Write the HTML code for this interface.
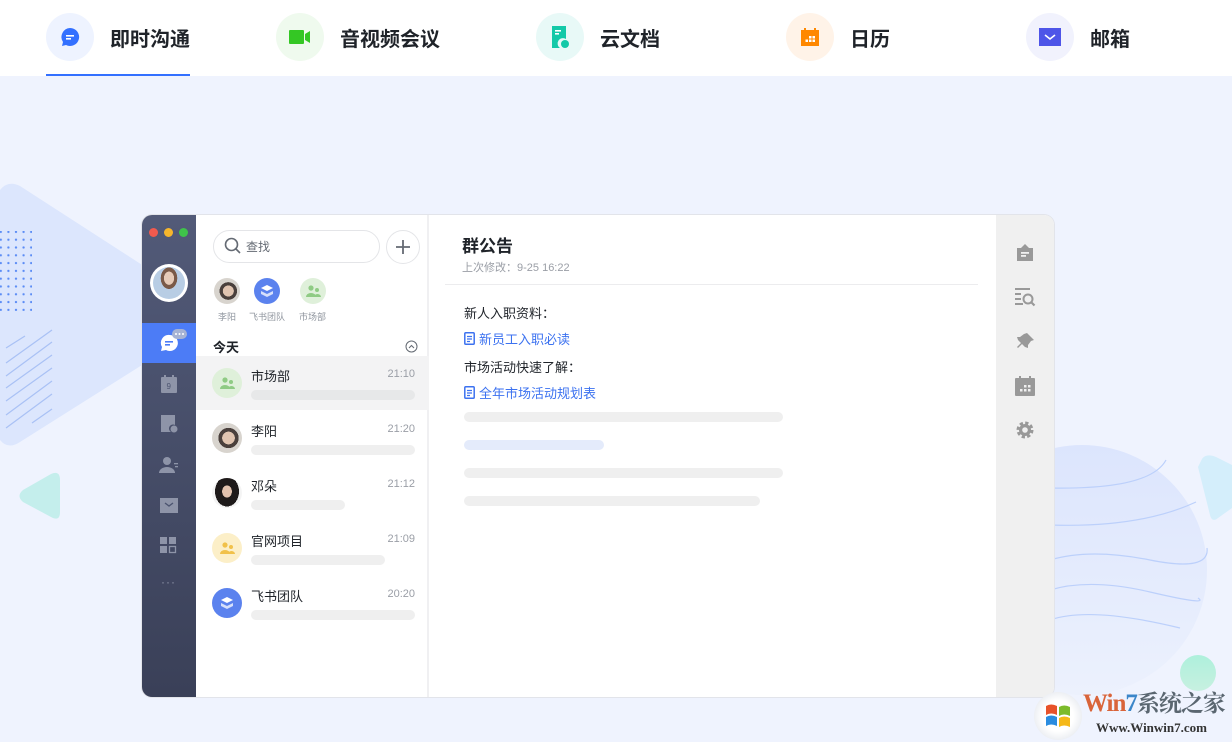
<!DOCTYPE html>
<html><head><meta charset="utf-8"><style>
*{margin:0;padding:0;box-sizing:border-box}
body{width:1232px;height:742px;overflow:hidden;background:#eff3fe;font-family:"Liberation Sans","Noto Sans CJK SC",sans-serif;position:relative;color:#1f2329}
.hdr{position:absolute;left:0;top:0;width:1232px;height:76px;background:#fff}
.tab{position:absolute;top:13px;height:48px;display:flex;align-items:center}
.tab .ic{width:48px;height:48px;border-radius:50%;display:flex;align-items:center;justify-content:center}
.tab span{margin-left:16px;font-size:20px;font-weight:bold;color:#1f2329}
.abs{position:absolute}
.win{position:absolute;left:142px;top:215px;width:912px;height:482px;border-radius:10px;overflow:hidden;background:#fff;box-shadow:0 0 0 1px #e2e4ea}
.side{position:absolute;left:0;top:0;width:54px;height:482px;background:linear-gradient(#525a78,#3a4058)}
.list{position:absolute;left:54px;top:0;width:233px;height:482px;background:#fff;border-right:2px solid #f0f0f2}
.rp{position:absolute;left:854px;top:0;width:58px;height:482px;background:#f0f0f0}
.bar{position:absolute;height:10px;border-radius:5px;background:#efefef}
.item{position:absolute;left:0;width:233px;height:54px}
.item .av{position:absolute;left:16px;top:12px;width:30px;height:30px;border-radius:50%}
.item .nm{position:absolute;left:55px;top:10px;font-size:13px;color:#1f2329}
.item .tm{position:absolute;right:14px;top:12px;font-size:11px;color:#9a9ea6}
.lnk{position:absolute;left:322px;font-size:13px;color:#3c72f0;display:flex;align-items:center;gap:4px}
</style></head><body>
<div class="hdr">
 <div class="tab" style="left:46px"><div class="ic" style="background:#eef3ff"><svg width="22" height="22" viewBox="0 0 22 22"><path d="M11 2a9 9 0 1 1-4 17L3 20l1-4A9 9 0 0 1 11 2z" fill="#3370ff"/><rect x="7" y="9" width="8" height="1.6" fill="#fff"/><rect x="7" y="12" width="5" height="1.6" fill="#fff"/></svg></div><span>即时沟通</span></div>
 <div class="tab" style="left:276px"><div class="ic" style="background:#effaee"><svg width="24" height="16"><rect x="1" y="1" width="15" height="14" rx="1" fill="#34c724"/><path d="M17 5l5-3v12l-5-3z" fill="#34c724"/></svg></div><span>音视频会议</span></div>
 <div class="tab" style="left:536px"><div class="ic" style="background:#e8f9f7"><svg width="20" height="24"><path d="M2 1h14v13a5 5 0 0 0-6 9H2z" fill="#14c9a8"/><circle cx="15" cy="19" r="4" fill="#14c9a8"/><rect x="5" y="5" width="6" height="1.6" fill="#fff"/><rect x="5" y="8" width="4" height="1.6" fill="#fff"/></svg></div><span>云文档</span></div>
 <div class="tab" style="left:786px"><div class="ic" style="background:#fff3e8"><svg width="20" height="20"><rect x="1" y="3" width="18" height="16" fill="#ff8800"/><rect x="4" y="1" width="2" height="4" fill="#ff8800"/><rect x="14" y="1" width="2" height="4" fill="#ff8800"/><g fill="#fff"><rect x="9" y="9" width="2.5" height="2.5"/><rect x="12.5" y="9" width="2.5" height="2.5"/><rect x="5.5" y="12.5" width="2.5" height="2.5"/><rect x="9" y="12.5" width="2.5" height="2.5"/><rect x="12.5" y="12.5" width="2.5" height="2.5"/></g></svg></div><span>日历</span></div>
 <div class="tab" style="left:1026px"><div class="ic" style="background:#f1f2fd"><svg width="22" height="18"><rect x="0" y="0" width="22" height="18" fill="#4e55e8"/><path d="M6 7l5 4 5-4" stroke="#fff" stroke-width="1.6" fill="none"/></svg></div><span>邮箱</span></div>
 <div class="abs" style="left:46px;top:74px;width:144px;height:2px;background:#3370ff"></div>
</div>

<svg class="abs" style="left:0;top:180px" width="150" height="270"><path d="M0 10 Q8 0 20 6 L150 90 L150 180 L20 262 Q8 270 0 260z" fill="#dce6fd"/>
<g stroke="#a9c1f5" stroke-width="1.2"><line x1="6" y1="168" x2="25" y2="156"/><line x1="6" y1="183" x2="52" y2="150"/><line x1="6" y1="196" x2="52" y2="162"/><line x1="6" y1="208" x2="52" y2="175"/><line x1="6" y1="221" x2="52" y2="188"/><line x1="6" y1="235" x2="52" y2="201"/><line x1="6" y1="248" x2="52" y2="214"/><line x1="32" y1="243" x2="52" y2="229"/></g>
</svg>
<div class="abs" style="left:0;top:231px;width:32px;height:80px;background-image:radial-gradient(circle,#5b8cf5 1px,transparent 1.3px);background-size:7.6px 7.8px;background-position:-3px -3px"></div>
<svg class="abs" style="left:18px;top:472px" width="45" height="48"><path d="M5 18 L33 2 Q42 -2 42 8 L42 40 Q42 50 33 45 L5 30 Q-2 24 5 18z" fill="#c4eeec"/></svg>
<svg class="abs" style="left:1050px;top:440px" width="182" height="260"><defs><linearGradient id="g" x1="0" y1="0" x2="0" y2="1"><stop offset="0" stop-color="#dce5fd"/><stop offset="1" stop-color="#ecf1fd"/></linearGradient></defs><circle cx="32" cy="130" r="125" fill="url(#g)"/><g stroke="#bcd0fb" stroke-width="1.2" fill="none"><path d="M0 48 Q100 50 116 20"/><path d="M0 85 Q90 88 146 62"/><path d="M0 120 Q40 108 100 120 T157 108"/><path d="M0 150 Q40 138 100 152 T148 158"/><path d="M0 180 Q40 166 130 188"/></g></svg>
<svg class="abs" style="left:1196px;top:453px" width="36" height="70"><path d="M6 6 Q10 0 20 4 L36 12 L36 55 L22 65 Q16 70 14 62 L2 14z" fill="#d4eefb"/></svg>
<div class="abs" style="left:1180px;top:655px;width:36px;height:36px;border-radius:50%;background:linear-gradient(#aef0dc,#c7f0e0)"></div>

<div class="win">
 <div class="side">
  <div class="abs" style="left:7px;top:13px;width:9px;height:9px;border-radius:50%;background:#f25a4e"></div>
  <div class="abs" style="left:22px;top:13px;width:9px;height:9px;border-radius:50%;background:#f6b62c"></div>
  <div class="abs" style="left:37px;top:13px;width:9px;height:9px;border-radius:50%;background:#3fc34a"></div>
  <div class="abs" style="left:8px;top:49px;width:38px;height:38px;border-radius:50%;background:#fff;padding:3px"><div style="width:32px;height:32px;border-radius:50%;background:radial-gradient(ellipse at 50% 35%,#e6cbb8 0 22%,#7a5a48 23% 36%,#b8cde4 37%)"></div></div>
  <div class="abs" style="left:0;top:108px;width:54px;height:40px;background:#4c7cf6"></div>
  <svg class="abs" style="left:16px;top:112px" width="32" height="30"><path d="M12 8a8 8 0 1 1-4 15L3 24l1-4A8 8 0 0 1 12 8z" fill="#fff"/><rect x="7" y="14" width="8" height="1.6" fill="#4c7cf6"/><rect x="7" y="17" width="5" height="1.6" fill="#4c7cf6"/><rect x="14" y="2" width="15" height="10" rx="5" fill="#a6b3d4"/><g fill="#fff"><circle cx="18" cy="7" r="1"/><circle cx="21.5" cy="7" r="1"/><circle cx="25" cy="7" r="1"/></g></svg>
  <svg class="abs" style="left:18px;top:160px" width="18" height="18"><rect x="1" y="2" width="16" height="16" rx="1" fill="#8e94a8"/><rect x="4" y="0" width="2" height="4" fill="#8e94a8"/><rect x="12" y="0" width="2" height="4" fill="#8e94a8"/><text x="6.5" y="14" font-size="8" fill="#4c5470" font-family="Liberation Sans">9</text></svg>
  <svg class="abs" style="left:18px;top:199px" width="18" height="19"><path d="M1 1h14v10a4 4 0 0 0-4 7H1z" fill="#8e94a8"/><circle cx="14" cy="15" r="3.5" fill="#8e94a8"/></svg>
  <svg class="abs" style="left:17px;top:241px" width="20" height="18"><circle cx="8" cy="5" r="4" fill="#8e94a8"/><path d="M0 17a8 6 0 0 1 16 0z" fill="#8e94a8"/><rect x="15" y="7" width="4" height="1.3" fill="#8e94a8"/><rect x="16" y="10" width="3" height="1.3" fill="#8e94a8"/></svg>
  <svg class="abs" style="left:18px;top:283px" width="18" height="15"><rect width="18" height="15" fill="#8e94a8"/><path d="M5 5l4 3 4-3" stroke="#4c5470" stroke-width="1.4" fill="none"/></svg>
  <svg class="abs" style="left:18px;top:322px" width="17" height="17" fill="#8e94a8"><rect width="7" height="7"/><rect x="9" width="7" height="7"/><rect y="9" width="7" height="7"/><rect x="9.5" y="9.5" width="6" height="6" fill="none" stroke="#8e94a8" stroke-width="1.3"/></svg>
  <div class="abs" style="left:19px;top:360px;font-size:12px;letter-spacing:1px;color:#8e94a8">···</div>
 </div>
 <div class="list">
  <div class="abs" style="left:17px;top:15px;width:167px;height:33px;border:1px solid #e4e5e8;border-radius:17px"></div>
  <svg class="abs" style="left:28px;top:22px" width="18" height="18"><circle cx="7.5" cy="7.5" r="6" stroke="#646a73" stroke-width="1.6" fill="none"/><path d="M12 12l4 4" stroke="#646a73" stroke-width="1.6"/></svg>
  <div class="abs" style="left:50px;top:23px;font-size:12px;color:#646a73">查找</div>
  <div class="abs" style="left:190px;top:15px;width:34px;height:34px;border:1px solid #e4e5e8;border-radius:50%"></div>
  <svg class="abs" style="left:199px;top:24px" width="16" height="16"><path d="M8 1v14M1 8h14" stroke="#646a73" stroke-width="1.8"/></svg>
  <div class="abs" style="left:18px;top:63px;width:26px;height:26px;border-radius:50%;background:radial-gradient(circle at 55% 50%,#e0c4b0 0 28%,#4a403c 29% 45%,#d8d4ce 46%)"></div>
  <div class="abs" style="left:58px;top:63px;width:26px;height:26px;border-radius:50%;background:#5b82ee"></div>
  <svg class="abs" style="left:64px;top:69px" width="14" height="14"><path d="M7 1l6 3-6 3-6-3z" fill="#fff"/><path d="M1 7l6 3 6-3v3l-6 3-6-3z" fill="#d6e0fb"/></svg>
  <div class="abs" style="left:104px;top:63px;width:26px;height:26px;border-radius:50%;background:#dff0da"></div>
  <svg class="abs" style="left:110px;top:70px" width="15" height="12" fill="#8fcb84"><circle cx="5" cy="3" r="2.6"/><path d="M0 12a5 4 0 0 1 10 0z"/><circle cx="11" cy="5" r="2"/><path d="M8 12a3.5 3 0 0 1 7 0z"/></svg>
  <div class="abs" style="left:22px;top:95px;font-size:9px;color:#8f959e">李阳</div>
  <div class="abs" style="left:53px;top:95px;font-size:9px;color:#8f959e">飞书团队</div>
  <div class="abs" style="left:103px;top:95px;font-size:9px;color:#8f959e">市场部</div>
  <div class="abs" style="left:17px;top:122px;font-size:13px;font-weight:bold;color:#1f2329">今天</div>
  <svg class="abs" style="left:209px;top:125px" width="13" height="13"><circle cx="6.5" cy="6.5" r="5.5" stroke="#646a73" fill="none"/><path d="M4 8l2.5-2.5L9 8" stroke="#646a73" fill="none"/></svg>
  <div class="item" style="top:141px;background:#f3f3f4;height:54px"><div class="av" style="background:#dff0da"></div><svg class="abs" style="left:24px;top:21px" width="15" height="12" fill="#8fcb84"><circle cx="5" cy="3" r="2.6"/><path d="M0 12a5 4 0 0 1 10 0z"/><circle cx="11" cy="5" r="2"/><path d="M8 12a3.5 3 0 0 1 7 0z"/></svg><div class="nm">市场部</div><div class="tm">21:10</div><div class="bar" style="left:55px;top:34px;width:164px;background:#e7e8e9"></div></div>
  <div class="item" style="top:196px"><div class="av" style="background:radial-gradient(circle at 55% 50%,#e0c4b0 0 28%,#4a403c 29% 45%,#d8d4ce 46%)"></div><div class="nm">李阳</div><div class="tm">21:20</div><div class="bar" style="left:55px;top:34px;width:164px"></div></div>
  <div class="item" style="top:251px"><div class="av" style="background:radial-gradient(ellipse 40% 50% at 50% 45%,#e2c2ae 0 40%,#1e1a1a 41% 100%,#f4f4f4 100%)"></div><div class="nm">邓朵</div><div class="tm">21:12</div><div class="bar" style="left:55px;top:34px;width:94px"></div></div>
  <div class="item" style="top:306px"><div class="av" style="background:#fcefc8"></div><svg class="abs" style="left:24px;top:21px" width="15" height="12" fill="#f1c14a"><circle cx="5" cy="3" r="2.6"/><path d="M0 12a5 4 0 0 1 10 0z"/><circle cx="11" cy="5" r="2"/><path d="M8 12a3.5 3 0 0 1 7 0z"/></svg><div class="nm">官网项目</div><div class="tm">21:09</div><div class="bar" style="left:55px;top:34px;width:134px"></div></div>
  <div class="item" style="top:361px"><div class="av" style="background:#5b82ee"></div><svg class="abs" style="left:24px;top:20px" width="14" height="14"><path d="M7 1l6 3-6 3-6-3z" fill="#fff"/><path d="M1 7l6 3 6-3v3l-6 3-6-3z" fill="#d6e0fb"/></svg><div class="nm">飞书团队</div><div class="tm">20:20</div><div class="bar" style="left:55px;top:34px;width:164px"></div></div>
 </div>
 <div class="abs" style="left:320px;top:17px;font-size:17px;font-weight:bold;color:#1f2329">群公告</div>
 <div class="abs" style="left:320px;top:44px;font-size:11px;color:#9a9ea6">上次修改：9-25 16:22</div>
 <div class="abs" style="left:303px;top:69px;width:533px;height:1px;background:#ececee"></div>
 <div class="abs" style="left:322px;top:88px;font-size:13px;color:#1f2329">新人入职资料：</div>
 <div class="lnk" style="top:114px"><svg width="11" height="13"><rect x="0.8" y="0.8" width="9.4" height="11.4" rx="1" stroke="#3c72f0" stroke-width="1.5" fill="none"/><path d="M3 4.5h5M3 7h5M3 9.5h3" stroke="#3c72f0" stroke-width="1.2"/></svg>新员工入职必读</div>
 <div class="abs" style="left:322px;top:142px;font-size:13px;color:#1f2329">市场活动快速了解：</div>
 <div class="lnk" style="top:168px"><svg width="11" height="13"><rect x="0.8" y="0.8" width="9.4" height="11.4" rx="1" stroke="#3c72f0" stroke-width="1.5" fill="none"/><path d="M3 4.5h5M3 7h5M3 9.5h3" stroke="#3c72f0" stroke-width="1.2"/></svg>全年市场活动规划表</div>
 <div class="bar" style="left:322px;top:197px;width:319px"></div>
 <div class="bar" style="left:322px;top:225px;width:140px;background:#e4ebfb"></div>
 <div class="bar" style="left:322px;top:253px;width:319px"></div>
 <div class="bar" style="left:322px;top:281px;width:296px"></div>
 <div class="rp">
  <svg class="abs" style="left:18px;top:27px" width="22" height="22" fill="#999"><path d="M11 2l4 4H19v13H3V6h4z"/><rect x="7" y="10" width="8" height="1.8" fill="#f0f0f0"/><rect x="7" y="13" width="5" height="1.8" fill="#f0f0f0"/></svg>
  <svg class="abs" style="left:18px;top:71px" width="22" height="22" fill="#999"><rect x="1" y="2" width="15" height="2"/><rect x="1" y="7" width="6" height="2"/><rect x="1" y="12" width="6" height="2"/><rect x="1" y="17" width="8" height="2"/><circle cx="14" cy="13" r="4.5" stroke="#999" stroke-width="2" fill="none"/><path d="M17 16l3.5 3.5" stroke="#999" stroke-width="2.2"/></svg>
  <svg class="abs" style="left:18px;top:116px" width="22" height="22" fill="#999"><path d="M13 2l7 7-3 1-3 4 0 3-3-1-3-3-4 4 -1-1 4-4-3-3-1-3 3 0 4-3z"/></svg>
  <svg class="abs" style="left:18px;top:160px" width="22" height="22" fill="#999"><rect x="1" y="3" width="20" height="18" rx="1"/><rect x="5" y="1" width="2" height="4"/><rect x="15" y="1" width="2" height="4"/><g fill="#f0f0f0"><rect x="10" y="10" width="2.5" height="2.5"/><rect x="14" y="10" width="2.5" height="2.5"/><rect x="6" y="14" width="2.5" height="2.5"/><rect x="10" y="14" width="2.5" height="2.5"/><rect x="14" y="14" width="2.5" height="2.5"/></g></svg>
  <svg class="abs" style="left:18px;top:204px" width="22" height="22"><circle cx="11" cy="11" r="6.5" stroke="#999" stroke-width="4" fill="none" stroke-dasharray="3 2.1"/><circle cx="11" cy="11" r="6" fill="#999"/><circle cx="11" cy="11" r="2.8" fill="#f0f0f0"/></svg>
 </div>
</div>

<div class="abs" style="left:1034px;top:692px;width:48px;height:48px;border-radius:50%;background:radial-gradient(circle,#fff 45%,#d8dde6)"></div>
<svg class="abs" style="left:1043px;top:701px" width="30" height="30"><path d="M3 5q5-3 11 0v9q-6-3-11 0z" fill="#e8522a"/><path d="M16 6q5-3 11 0v9q-6-3-11 0z" fill="#7cbb2b"/><path d="M3 16q5-3 11 0v9q-6-3-11 0z" fill="#2a8ce0"/><path d="M16 17q5-3 11 0v9q-6-3-11 0z" fill="#f5b818"/></svg>
<div class="abs" style="left:1083px;top:690px;white-space:nowrap;font-family:'Liberation Serif','Noto Serif CJK SC',serif;font-size:25px;line-height:28px;font-weight:bold;color:#d9643a;letter-spacing:-1px">Win<span style="color:#3b86c9">7</span><span style="color:#5a6670;font-size:23px">系统之家</span></div>
<div class="abs" style="left:1096px;top:720px;white-space:nowrap;font-family:'Liberation Serif',serif;font-size:13px;font-weight:bold;color:#333">Www.Winwin7.com</div>
</body></html>
